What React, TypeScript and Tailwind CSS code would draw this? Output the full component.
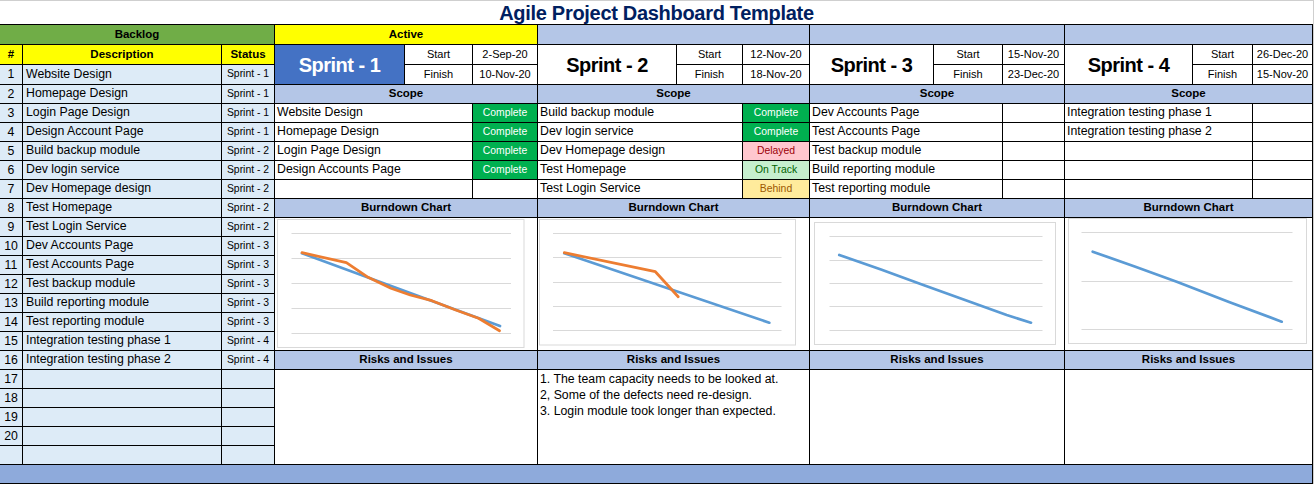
import React from 'react';

type Status = 'Complete' | 'Delayed' | 'On Track' | 'Behind' | '';

const backlog: [string, string][] = [
  ['Website Design', 'Sprint - 1'],
  ['Homepage Design', 'Sprint - 1'],
  ['Login Page Design', 'Sprint - 1'],
  ['Design Account Page', 'Sprint - 1'],
  ['Build backup module', 'Sprint - 2'],
  ['Dev login service', 'Sprint - 2'],
  ['Dev Homepage design', 'Sprint - 2'],
  ['Test Homepage', 'Sprint - 2'],
  ['Test Login Service', 'Sprint - 2'],
  ['Dev Accounts Page', 'Sprint - 3'],
  ['Test Accounts Page', 'Sprint - 3'],
  ['Test backup module', 'Sprint - 3'],
  ['Build reporting module', 'Sprint - 3'],
  ['Test reporting module', 'Sprint - 3'],
  ['Integration testing phase 1', 'Sprint - 4'],
  ['Integration testing phase 2', 'Sprint - 4'],
];

const statusStyle: Record<string, string> = {
  Complete: 'bg-[#00b050] text-white',
  Delayed: 'bg-[#ffc7ce] text-[#9c0006]',
  'On Track': 'bg-[#c6efce] text-[#006100]',
  Behind: 'bg-[#ffeb9c] text-[#9c5700]',
  '': 'bg-white',
};

type Chart = {
  w: number;
  frame: [number, number, number, number];
  grid: number[];
  gx: [number, number];
  blue: string;
  orange?: string;
};

type Sprint = {
  name: string;
  cols: string;
  top: string;
  topClass: string;
  nameClass: string;
  start: string;
  finish: string;
  scope: [string, Status][];
  chart: Chart;
  risks: string[];
};

const sprints: Sprint[] = [
  {
    name: 'Sprint - 1',
    cols: 'w-[262px] grid-cols-[129px_67px_64px]',
    top: 'Active',
    topClass: 'bg-[#ffff00]',
    nameClass: 'bg-[#4472c4] text-white',
    start: '2-Sep-20',
    finish: '10-Nov-20',
    scope: [
      ['Website Design', 'Complete'],
      ['Homepage Design', 'Complete'],
      ['Login Page Design', 'Complete'],
      ['Design Accounts Page', 'Complete'],
      ['', ''],
    ],
    chart: {
      w: 262,
      frame: [2.5, 1.5, 246.5, 128],
      grid: [15.5, 40.5, 65.5, 90.5, 115.5],
      gx: [16.5, 236],
      blue: '27,35.3 225,108',
      orange:
        '27,34.7 71.4,44.7 93.1,59.3 115.9,70.3 135.2,77 156.9,82.7 180.7,92 203.5,100.3 224.5,112.7',
    },
    risks: [],
  },
  {
    name: 'Sprint - 2',
    cols: 'w-[271px] grid-cols-[138px_65px_66px]',
    top: '',
    topClass: 'bg-[#b4c6e7]',
    nameClass: 'bg-white text-black',
    start: '12-Nov-20',
    finish: '18-Nov-20',
    scope: [
      ['Build backup module', 'Complete'],
      ['Dev login service', 'Complete'],
      ['Dev Homepage design', 'Delayed'],
      ['Test Homepage', 'On Track'],
      ['Test Login Service', 'Behind'],
    ],
    chart: {
      w: 271,
      frame: [1.5, 1.5, 256, 125.5],
      grid: [15.5, 39.5, 64.5, 88.5, 112.5],
      gx: [15, 243.5],
      blue: '26.3,35.3 231.3,104.7',
      orange: '26.3,34.7 117.4,53.7 140.2,78.7',
    },
    risks: [
      '1. The team capacity needs to be looked at.',
      '2, Some of the defects need re-design.',
      '3. Login module took longer than expected.',
    ],
  },
  {
    name: 'Sprint - 3',
    cols: 'w-[254px] grid-cols-[123px_68px_61px]',
    top: '',
    topClass: 'bg-[#b4c6e7]',
    nameClass: 'bg-white text-black',
    start: '15-Nov-20',
    finish: '23-Dec-20',
    scope: [
      ['Dev Accounts Page', ''],
      ['Test Accounts Page', ''],
      ['Test backup module', ''],
      ['Build reporting module', ''],
      ['Test reporting module', ''],
    ],
    chart: {
      w: 254,
      frame: [4.5, 4.5, 241, 122],
      grid: [18.5, 42.5, 65.5, 88.5, 112.5],
      gx: [19.5, 232.5],
      blue: '29.3,37 71,51.5 113.3,67 155,82 196.7,97 221,104.7',
    },
    risks: [],
  },
  {
    name: 'Sprint - 4',
    cols: 'w-[247px] grid-cols-[127px_59px_59px]',
    top: '',
    topClass: 'bg-[#b4c6e7]',
    nameClass: 'bg-white text-black',
    start: '26-Dec-20',
    finish: '15-Nov-20',
    scope: [
      ['Integration testing phase 1', ''],
      ['Integration testing phase 2', ''],
      ['', ''],
      ['', ''],
      ['', ''],
    ],
    chart: {
      w: 247,
      frame: [3.5, 0.5, 238, 125],
      grid: [14.5, 63.5, 111.5],
      gx: [16.5, 227.5],
      blue: '27.7,33.7 69.7,48.5 111.7,63.7 164,84 216.7,103.7',
    },
    risks: [],
  },
];

const rows = 'grid-rows-[19px_19px_19px_repeat(20,18px)]';

const Head = ({ className = '', children }: { className?: string; children?: React.ReactNode }) => (
  <div
    className={`flex items-center justify-center whitespace-nowrap text-[11.5px] font-bold leading-none text-black ${className}`}
  >
    {children}
  </div>
);

const BurnChart = ({ c }: { c: Chart }) => (
  <svg width={c.w} height={132} viewBox={`0 0 ${c.w} 132`} className="block">
    <rect x={c.frame[0]} y={c.frame[1]} width={c.frame[2]} height={c.frame[3]} fill="white" stroke="#d9d9d9" />
    {c.grid.map((y) => (
      <line key={y} x1={c.gx[0]} x2={c.gx[1]} y1={y} y2={y} stroke="#d9d9d9" strokeWidth={1} />
    ))}
    <polyline points={c.blue} fill="none" stroke="#5b9bd5" strokeWidth={2.75} strokeLinecap="round" strokeLinejoin="round" />
    {c.orange && (
      <polyline points={c.orange} fill="none" stroke="#ed7d31" strokeWidth={2.75} strokeLinecap="round" strokeLinejoin="round" />
    )}
  </svg>
);

const SprintBlock = ({ s }: { s: Sprint }) => (
  <div className={`grid gap-px ${s.cols} ${rows}`}>
    <Head className={`col-span-3 ${s.topClass}`}>{s.top}</Head>
    <div
      className={`row-span-2 flex items-center justify-center whitespace-nowrap text-[20px] font-bold leading-none tracking-[-0.5px] ${s.nameClass}`}
    >
      {s.name}
    </div>
    <div className="flex items-center justify-center bg-white text-[11px] leading-none">Start</div>
    <div className="flex items-center justify-center bg-white text-[11px] leading-none">{s.start}</div>
    <div className="flex items-center justify-center bg-white text-[11px] leading-none">Finish</div>
    <div className="flex items-center justify-center bg-white text-[11px] leading-none">{s.finish}</div>

    <Head className="col-span-3 bg-[#b4c6e7]">Scope</Head>
    {s.scope.map(([text, st], i) => (
      <React.Fragment key={i}>
        <div className="col-span-2 flex items-center whitespace-nowrap bg-white pl-[2px] pb-px text-[12.3px] leading-none">
          {text}
        </div>
        <div
          className={`flex items-center justify-center whitespace-nowrap text-[10.4px] leading-none ${statusStyle[st]}`}
        >
          {st}
        </div>
      </React.Fragment>
    ))}

    <Head className="col-span-3 bg-[#b4c6e7]">Burndown Chart</Head>
    <div className="col-span-3 row-span-7 overflow-hidden bg-white">
      <BurnChart c={s.chart} />
    </div>

    <Head className="col-span-3 bg-[#b4c6e7]">Risks and Issues</Head>
    <div className="col-span-3 row-span-5 bg-white pl-[2px] pt-px text-[12.3px] leading-[16px]">
      {s.risks.map((r) => (
        <div key={r} className="whitespace-nowrap">
          {r}
        </div>
      ))}
    </div>
  </div>
);

const Backlog = () => {
  const list = Array.from({ length: 21 }, (_, i) => i);
  return (
    <div className={`grid w-[274px] grid-cols-[22px_198px_52px] gap-px ${rows}`}>
      <Head className="col-span-3 bg-[#70ad47]">Backlog</Head>
      <Head className="bg-[#ffff00]">#</Head>
      <Head className="bg-[#ffff00]">Description</Head>
      <Head className="bg-[#ffff00]">Status</Head>
      {list.map((i) => (
        <React.Fragment key={i}>
          <div className="flex items-center justify-center bg-[#ddebf7] text-[12.3px] leading-none">
            {i < 20 ? i + 1 : ''}
          </div>
          <div className="flex items-center whitespace-nowrap bg-[#ddebf7] pl-[3px] pb-px text-[12.3px] leading-none">
            {backlog[i]?.[0] ?? ''}
          </div>
          <div className="flex items-center justify-center whitespace-nowrap bg-[#ddebf7] text-[10.4px] leading-none">
            {backlog[i]?.[1] ?? ''}
          </div>
        </React.Fragment>
      ))}
    </div>
  );
};

export default function App() {
  return (
    <div className="h-[484px] w-[1314px] overflow-hidden border-r border-t border-[#cfcfcf] bg-white font-['Liberation_Sans',Arial,sans-serif] text-black">
      <div className="flex h-[23px] items-center justify-center text-[20px] font-bold leading-none tracking-[-0.3px] text-[#002060]">
        Agile Project Dashboard Template
      </div>
      <div className="flex w-[1313px] flex-col gap-px bg-black pb-px pr-px pt-px">
        <div className="flex h-[439px] gap-px">
          <Backlog />
          {sprints.map((s) => (
            <SprintBlock key={s.name} s={s} />
          ))}
        </div>
        <div className="h-[18px] bg-[#8eaadb]" />
      </div>
    </div>
  );
}
